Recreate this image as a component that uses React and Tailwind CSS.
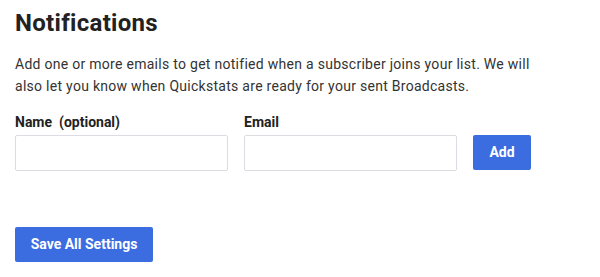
export default function App() {
  return (
    <div className="w-[600px] h-[277px] bg-white px-[15px] pt-[8px]" style={{ fontFamily: "Roboto, 'Liberation Sans', sans-serif" }}>
      <h1 className="text-[24px] leading-[30px] font-bold text-[#222] tracking-[0.3px]">Notifications</h1>
      <p className="mt-[15px] text-[14px] leading-[22px] text-[#333] tracking-[0.28px] w-[540px]">
        Add one or more emails to get notified when a subscriber joins your list. We will also let you know when Quickstats are ready for your sent Broadcasts.
      </p>
      <div className="mt-[16px] flex items-end gap-4">
        <div className="flex flex-col">
          <label className="text-[14px] leading-[18px] font-bold text-[#222] mb-[4px]">Name&nbsp; (optional)</label>
          <input className="w-[213px] h-[36px] border border-[#dcdce2] rounded-[2px] outline-none" />
        </div>
        <div className="flex flex-col">
          <label className="text-[14px] leading-[18px] font-bold text-[#222] mb-[4px]">Email</label>
          <input className="w-[213px] h-[36px] border border-[#dcdce2] rounded-[2px] outline-none" />
        </div>
        <button className="w-[58px] h-[35px] mb-[1px] bg-[#3b6ce0] text-white text-[14px] font-bold rounded-[2px]">Add</button>
      </div>
      <button className="mt-[56px] w-[138px] h-[35px] bg-[#3b6ce0] text-white text-[14px] font-bold rounded-[2px] block">Save All Settings</button>
    </div>
  );
}
